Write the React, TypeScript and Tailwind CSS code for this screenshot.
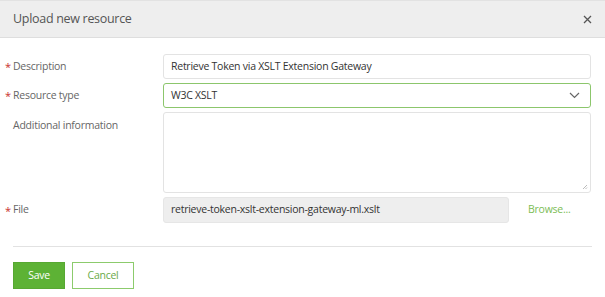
import React from 'react';

const Req = () => <span className="w-[8px] text-[#c9302c] text-[11px] leading-none">*</span>;

export default function App() {
  return (
    <div className="w-[605px] h-[297px] bg-white text-[10.5px] tracking-[-0.25px] text-[#333] overflow-hidden" style={{ fontFamily: '"Open Sans", "Noto Sans", sans-serif' }}>
      {/* Header */}
      <div className="h-[38px] bg-[#eeeeee] border-t border-[#e2e2e2] border-b border-b-[#dedede] flex items-center justify-between pl-[13px] pr-[13px]">
        <span className="text-[12.5px] tracking-[-0.3px] text-[#555]">Upload new resource</span>
        <svg width="9" height="9" viewBox="0 0 9 9" className="text-[#555]">
          <path d="M1 1L8 8M8 1L1 8" stroke="currentColor" strokeWidth="1.3" />
        </svg>
      </div>

      {/* Body */}
      <div className="pt-[16px] pr-[14px] flex flex-col gap-[4px]">
        <div className="flex items-center">
          <div className="w-[163px] pl-[5px] flex items-center text-[#666]"><Req />Description</div>
          <div className="flex-1 h-[25px] border border-[#e3e3e3] rounded-[3px] flex items-center px-[7px]">
            Retrieve Token via XSLT Extension Gateway
          </div>
        </div>
        <div className="flex items-center">
          <div className="w-[163px] pl-[5px] flex items-center text-[#666]"><Req />Resource type</div>
          <div className="flex-1 h-[25px] border border-[#8cc66c] rounded-[3px] flex items-center justify-between pl-[7px] pr-[10px]">
            <span>W3C XSLT</span>
            <svg width="11" height="7" viewBox="0 0 11 7" className="text-[#666]">
              <path d="M1 1L5.5 5.5L10 1" stroke="currentColor" strokeWidth="1.2" fill="none" />
            </svg>
          </div>
        </div>
        <div className="flex items-start">
          <div className="w-[163px] pl-[13px] pt-[6px] text-[#666]">Additional information</div>
          <div className="flex-1 h-[81px] border border-[#e3e3e3] rounded-[3px] relative">
            <svg width="6" height="6" viewBox="0 0 6 6" className="absolute right-[2px] bottom-[2px] text-[#aaa]">
              <path d="M5 1L1 5M5 3.5L3.5 5" stroke="currentColor" strokeWidth="0.8" />
            </svg>
          </div>
        </div>
        <div className="flex items-center">
          <div className="w-[163px] pl-[5px] flex items-center text-[#666]"><Req />File</div>
          <div className="w-[346px] h-[26px] bg-[#eeeeee] border border-[#e6e6e6] rounded-[3px] flex items-center px-[7px]">
            retrieve-token-xslt-extension-gateway-ml.xslt
          </div>
          <span className="ml-[19px] text-[#7cbd55]">Browse...</span>
        </div>
      </div>

      {/* Footer */}
      <div className="mx-[13px] mt-[23px] border-t border-[#e2e2e2] pt-[15px] flex gap-[7px]">
        <button className="w-[52px] h-[27px] bg-[#5db235] border border-[#57a832] text-white">Save</button>
        <button className="w-[62px] h-[27px] bg-white border border-[#8ccb6c] text-[#6aaa48]">Cancel</button>
      </div>
    </div>
  );
}
